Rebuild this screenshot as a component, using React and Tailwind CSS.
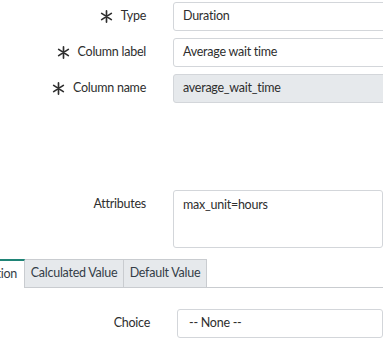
import React from 'react';

const Req = () => (
  <svg className="w-[13px] h-[13px] text-[#2e2e2e]" viewBox="0 0 14 14" fill="none" stroke="currentColor" strokeWidth={1.8} strokeLinecap="round">
    <path d="M7 1v12M1.8 3.6l10.4 6.8M12.2 3.6l-10.4 6.8" />
  </svg>
);

const Row = ({ label, req, children }) => (
  <div className="flex items-center">
    <div className="w-[146px] flex items-center justify-end gap-[8px] shrink-0 text-[#2e2e2e]">
      {req && <Req />}
      <span>{label}</span>
    </div>
    <div className="ml-[27px] flex-1">{children}</div>
  </div>
);

const inputCls = 'h-[29px] w-[240px] border border-[#d3d6da] rounded-[3px] px-[9px] flex items-center text-[#2e2e2e]';

export default function App() {
  return (
    <div className="w-[383px] h-[341px] overflow-hidden bg-white font-['Lato',sans-serif] text-[12.5px] tracking-[-0.25px]">
      <div className="pt-[2px] flex flex-col gap-[7px]">
        <Row label="Type" req>
          <div className={`${inputCls} bg-white`}>Duration</div>
        </Row>
        <Row label="Column label" req>
          <div className={`${inputCls} bg-white`}>Average wait time</div>
        </Row>
        <Row label="Column name" req>
          <div className={`${inputCls} bg-[#e6e9ec]`}>average_wait_time</div>
        </Row>
      </div>

      <div className="mt-[87px] flex items-start">
        <div className="w-[146px] shrink-0 text-right text-[#2e2e2e] pt-[5px]">Attributes</div>
        <div className="ml-[27px] h-[58px] w-[240px] border border-[#d3d6da] rounded-[3px] px-[9px] pt-[5px] text-[#2e2e2e]">
          max_unit=hours
        </div>
      </div>

      <div className="mt-[11px] flex items-end h-[29px] border-b border-[#c9ccd0]">
        <div className="w-[25px] h-[29px] -mb-px bg-white border-t-2 border-t-[#1f8476] border-r border-r-[#c9ccd0] flex items-center justify-end pr-[7px] overflow-hidden text-[#343d47]">
          <span className="whitespace-nowrap">tion</span>
        </div>
        <div className="w-[99px] h-[28px] bg-[#e6e9ec] border-t border-r border-[#c9ccd0] flex items-center justify-center text-[#343d47] whitespace-nowrap">
          Calculated Value
        </div>
        <div className="w-[83px] h-[28px] bg-[#e6e9ec] border-t border-r border-[#c9ccd0] flex items-center justify-center text-[#343d47] whitespace-nowrap">
          Default Value
        </div>
      </div>

      <div className="mt-[21px] flex items-center">
        <div className="w-[150px] shrink-0 text-right text-[#2e2e2e]">Choice</div>
        <div className="ml-[27px] h-[29px] w-[240px] border border-[#d3d6da] rounded-[3px] px-[11px] flex items-center text-[#2e2e2e]">
          -- None --
        </div>
      </div>
    </div>
  );
}
